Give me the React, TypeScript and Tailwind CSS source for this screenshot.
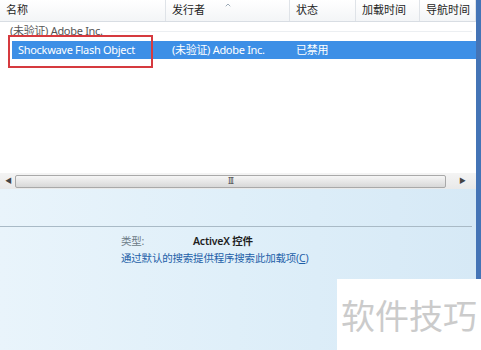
import { ChevronUp } from "lucide-react";

const font = { fontFamily: '"Noto Sans", "Noto Sans CJK SC", sans-serif' };

const columns = [
  { label: "名称", width: "w-[166px]" },
  { label: "发行者", width: "w-[124px]", sorted: true },
  { label: "状态", width: "w-[66px]" },
  { label: "加载时间", width: "w-[64px]" },
  { label: "导航时间", width: "flex-1" },
];

function Header() {
  return (
    <div className="flex h-[22px] border-b border-[#d8dde3] bg-gradient-to-b from-white to-[#f3f5f7] text-[11px] text-[#1e1e1e]">
      {columns.map((c) => (
        <div
          key={c.label}
          className={`${c.width} relative flex items-center border-r border-[#dfe3e8] pl-[6px]`}
        >
          {c.label}
          {c.sorted && (
            <ChevronUp className="absolute left-[58px] top-[1px] h-[8px] w-[8px] text-[#8a9aa8]" strokeWidth={2.5} />
          )}
        </div>
      ))}
    </div>
  );
}

function ScrollBar() {
  return (
    <div className="flex h-[16px] items-center bg-gradient-to-b from-[#f4f4f4] to-[#e9e9e9] px-[2px]">
      <span className="w-[13px] text-center text-[7px] text-[#444]">◀</span>
      <div className="flex h-[13px] flex-1 items-center justify-center rounded-[2px] border border-[#a9a9a9] bg-gradient-to-b from-[#f6f6f6] to-[#d8d8d8]">
        <span className="text-[8px] leading-none tracking-[-1px] text-[#555]">III</span>
      </div>
      <span className="w-[28px] pl-[13px] text-[7px] text-[#444]">▶</span>
    </div>
  );
}

export default function App() {
  return (
    <div className="relative flex h-[350px] w-[481px] overflow-hidden bg-white" style={font}>
      <div className="flex min-w-0 flex-1 flex-col">
        <Header />
        <div className="relative flex-1 bg-white text-[11px] tracking-[-0.3px]">
          <div className="flex h-[18px] items-center gap-2 pl-[10px] pt-[1px] text-[#555]">
            <span>(未验证) Adobe Inc.</span>
            <div className="mr-[4px] h-px flex-1 bg-[#eceff2]" />
          </div>
          <div className="ml-[12px] mt-[1px] flex h-[18px] items-center bg-[#3d8fe6] text-white">
            <span className="w-[154px] pl-[6px]">Shockwave Flash Object</span>
            <span className="w-[124px] pl-[6px]">(未验证) Adobe Inc.</span>
            <span className="pl-[6px]">已禁用</span>
          </div>
          <div className="pointer-events-none absolute left-[8px] top-[13px] h-[33px] w-[145px] border-2 border-[#d63a3f]" />
        </div>
        <ScrollBar />
        <div className="flex h-[161px] flex-col bg-gradient-to-r from-[#e9f4fb] via-[#dfeff9] to-[#d6e9f6]">
          <div className="mt-[37px] mr-[4px] h-px bg-[#a9bac6]" />
          <div className="pl-[121px] pt-[6px] text-[10.5px] leading-[17px] tracking-[-0.2px]">
            <div className="flex">
              <span className="w-[72px] text-[#6b7a86]">类型:</span>
              <span className="font-semibold text-[#1e1e1e]">ActiveX 控件</span>
            </div>
            <div className="text-[#1d5fa8]">
              通过默认的搜索提供程序搜索此加载项(<span className="underline">C</span>)
            </div>
          </div>
        </div>
      </div>
      <div className="w-[5px] bg-[#4474b6]" />
      <div className="absolute bottom-0 right-0 flex h-[71px] w-[144px] items-center bg-white pl-[4px]">
        <span
          className="text-[34px] leading-none text-[#cbcbcb]"
          style={{ fontFamily: '"Noto Sans CJK SC", sans-serif' }}
        >
          软件技巧
        </span>
      </div>
    </div>
  );
}
